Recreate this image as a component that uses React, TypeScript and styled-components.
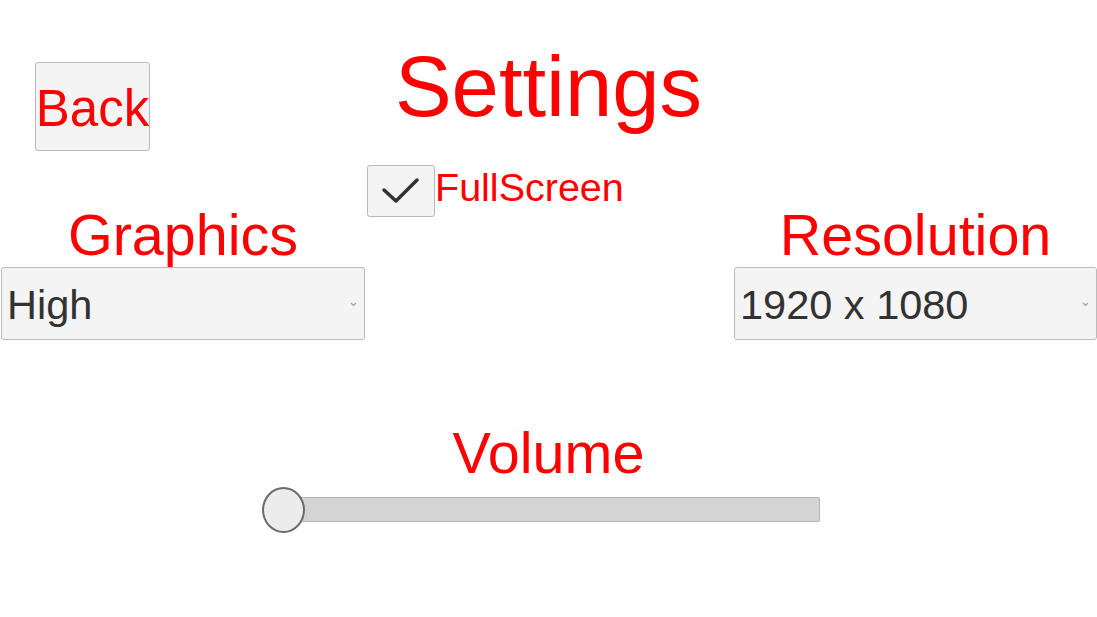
import React, { useState } from 'react';
import styled, { createGlobalStyle } from 'styled-components';

const GlobalStyle = createGlobalStyle`
  html, body {
    margin: 0;
    padding: 0;
    background: #ffffff;
  }
  body {
    font-family: 'Liberation Sans', Arial, sans-serif;
    overflow: hidden;
  }
`;

const Page = styled.div`
  width: 1097px;
  height: 617px;
  display: flex;
  flex-direction: column;
  background: #ffffff;
`;

const Header = styled.div`
  display: grid;
  grid-template-columns: 1fr auto 1fr;
  align-items: start;
`;

const BackButton = styled.button`
  justify-self: start;
  margin: 62px 0 0 35px;
  width: 115px;
  height: 89px;
  padding: 4px 0 0;
  display: flex;
  align-items: center;
  justify-content: center;
  background: #f4f4f4;
  border: 1px solid #b9b9b9;
  border-radius: 3px;
  color: #ff0000;
  font-family: 'Liberation Sans', Arial, sans-serif;
  font-size: 51px;
  line-height: 1;
  cursor: pointer;
`;

const Title = styled.h1`
  margin: 44px 0 0;
  font-size: 85px;
  font-weight: 400;
  line-height: 1;
  color: #ff0000;
`;

const OptionsRow = styled.div`
  margin-top: 14px;
  display: grid;
  grid-template-columns: 365px 1fr 363px;
`;

const OptionColumn = styled.div<{ $inset?: number }>`
  display: flex;
  flex-direction: column;
  padding-left: ${(p) => p.$inset ?? 0}px;
`;

const Label = styled.div<{ $top?: number }>`
  margin-top: ${(p) => p.$top ?? 0}px;
  font-size: 57.5px;
  line-height: 56px;
  color: #ff0000;
  text-align: center;
`;

const Dropdown = styled.div`
  margin-top: 4px;
  height: 73px;
  box-sizing: border-box;
  display: flex;
  align-items: center;
  justify-content: space-between;
  padding: 2px 7px 0 5px;
  background: #f4f4f4;
  border: 1px solid #bababa;
  border-radius: 3px;
  color: #323232;
  font-size: 41.5px;
  line-height: 1;
  cursor: pointer;
`;

const Toggle = styled.label`
  display: flex;
  align-items: flex-start;
  padding-left: 2px;
  cursor: pointer;
`;

const CheckBox = styled.span`
  width: 68px;
  height: 52px;
  box-sizing: border-box;
  display: flex;
  align-items: center;
  justify-content: center;
  background: #f4f4f4;
  border: 1px solid #b9b9b9;
  border-radius: 3px;
`;

const ToggleText = styled.span`
  margin-top: 3px;
  font-size: 39.5px;
  line-height: 1;
  color: #ff0000;
`;

const VolumeSection = styled.div`
  margin-top: 85px;
  display: flex;
  flex-direction: column;
  align-items: center;
`;

const SliderTrack = styled.div`
  position: relative;
  margin: 16px 0 0 8px;
  width: 535px;
  height: 25px;
  box-sizing: border-box;
  background: #d4d4d4;
  border: 1px solid #b4b4b4;
  border-radius: 2px;
`;

const SliderHandle = styled.div`
  position: absolute;
  top: -11px;
  left: -24px;
  width: 43px;
  height: 46px;
  box-sizing: border-box;
  border-radius: 50%;
  background: #ececec;
  border: 2px solid #6a6a6a;
`;

const Chevron = () => (
  <svg width="7" height="5" viewBox="0 0 7 5">
    <path d="M1 1 L3.5 3.5 L6 1" fill="none" stroke="#a0a0a0" strokeWidth="1.2" />
  </svg>
);

const App: React.FC = () => {
  const [fullScreen, setFullScreen] = useState(true);

  return (
    <Page>
      <GlobalStyle />
      <Header>
        <BackButton>Back</BackButton>
        <Title>Settings</Title>
        <div />
      </Header>

      <OptionsRow>
        <OptionColumn $inset={1}>
          <Label $top={42}>Graphics</Label>
          <Dropdown>
            <span>High</span>
            <Chevron />
          </Dropdown>
        </OptionColumn>

        <OptionColumn>
          <Toggle onClick={() => setFullScreen(!fullScreen)}>
            <CheckBox>
              {fullScreen && (
                <svg width="44" height="30" viewBox="0 0 44 30">
                  <path
                    d="M5 14 L17 25 L38 4"
                    fill="none"
                    stroke="#323232"
                    strokeWidth="3.5"
                    strokeLinecap="round"
                    strokeLinejoin="round"
                  />
                </svg>
              )}
            </CheckBox>
            <ToggleText>FullScreen</ToggleText>
          </Toggle>
        </OptionColumn>

        <OptionColumn>
          <Label $top={42}>Resolution</Label>
          <Dropdown>
            <span>1920 x 1080</span>
            <Chevron />
          </Dropdown>
        </OptionColumn>
      </OptionsRow>

      <VolumeSection>
        <Label>Volume</Label>
        <SliderTrack>
          <SliderHandle />
        </SliderTrack>
      </VolumeSection>
    </Page>
  );
};

export default App;
